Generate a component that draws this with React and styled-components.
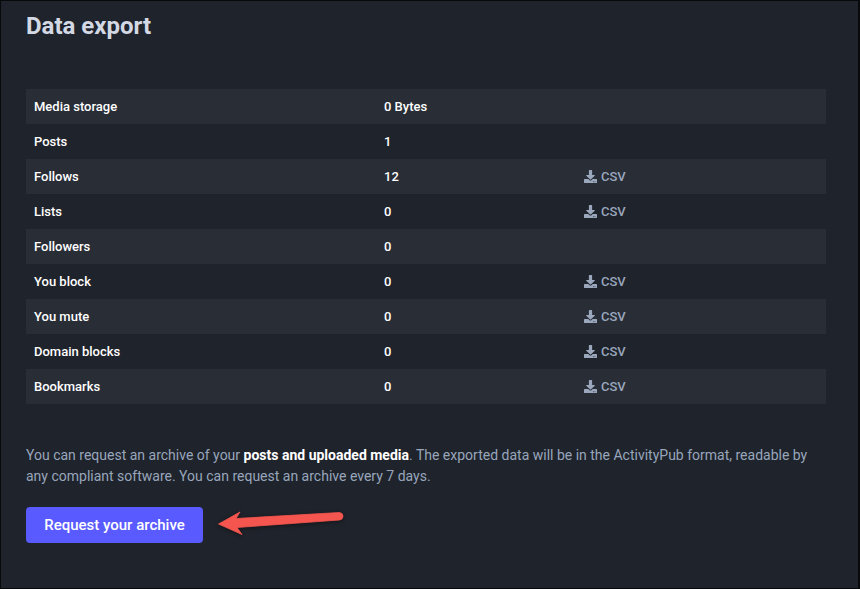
import React from 'react';
import styled, { createGlobalStyle } from 'styled-components';
import { FaDownload } from 'react-icons/fa';

const GlobalStyle = createGlobalStyle`
  html, body {
    margin: 0;
    padding: 0;
    background: #1f232b;
  }
  * {
    box-sizing: border-box;
  }
`;

const Page = styled.div`
  position: relative;
  width: 860px;
  height: 589px;
  padding: 11px 25px 0;
  background: #1f232b;
  border: 1px solid #08090b;
  border-right-width: 2px;
  font-family: Roboto, "Liberation Sans", sans-serif;
  overflow: hidden;
`;

const Title = styled.h1`
  margin: 0 0 49px;
  height: 28px;
  font-size: 24px;
  line-height: 28px;
  font-weight: 700;
  color: #d3d9e4;
`;

const Table = styled.div`
  width: 800px;
  margin-bottom: 41px;
`;

const Row = styled.div`
  display: grid;
  grid-template-columns: 350px 200px 250px;
  align-items: center;
  height: 35px;
  padding-bottom: 1px;
  background: ${({ $shaded }) => ($shaded ? '#282d36' : 'transparent')};
  font-size: 13px;
  font-weight: 500;
`;

const Label = styled.div`
  padding-left: 8px;
  color: #ffffff;
`;

const Value = styled.div`
  padding-left: 8px;
  color: #ffffff;
`;

const CsvLink = styled.a`
  display: flex;
  align-items: center;
  gap: 4px;
  padding-left: 8px;
  color: #9aa7bd;
  font-weight: 500;
  text-decoration: none;
`;

const Note = styled.p`
  width: 800px;
  margin: 0 0 20px;
  font-size: 14px;
  line-height: 21px;
  color: #98a6bc;

  strong {
    color: #ffffff;
    font-weight: 700;
  }
`;

const Button = styled.button`
  display: block;
  width: 177px;
  height: 36px;
  padding: 0;
  border: none;
  border-radius: 4px;
  background: #595aff;
  color: #ffffff;
  font-family: inherit;
  font-size: 15px;
  font-weight: 500;
`;

const Arrow = styled.svg`
  position: absolute;
  left: 209px;
  top: 499px;
  width: 145px;
  height: 45px;
  filter: drop-shadow(0 1px 2px rgba(0, 0, 0, 0.45));
`;

const rows = [
  { label: 'Media storage', value: '0 Bytes' },
  { label: 'Posts', value: '1' },
  { label: 'Follows', value: '12', csv: true },
  { label: 'Lists', value: '0', csv: true },
  { label: 'Followers', value: '0' },
  { label: 'You block', value: '0', csv: true },
  { label: 'You mute', value: '0', csv: true },
  { label: 'Domain blocks', value: '0', csv: true },
  { label: 'Bookmarks', value: '0', csv: true },
];

export default function App() {
  return (
    <Page>
      <GlobalStyle />
      <Title>Data export</Title>
      <Table>
        {rows.map((row, i) => (
          <Row key={row.label} $shaded={i % 2 === 0}>
            <Label>{row.label}</Label>
            <Value>{row.value}</Value>
            {row.csv ? (
              <CsvLink>
                <FaDownload size={13} />
                CSV
              </CsvLink>
            ) : (
              <span />
            )}
          </Row>
        ))}
      </Table>
      <Note>
        You can request an archive of your <strong>posts and uploaded media</strong>. The exported
        data will be in the ActivityPub format, readable by any compliant software. You can request
        an archive every 7 days.
      </Note>
      <Button>Request your archive</Button>
      <Arrow viewBox="0 0 145 45">
        <path d="M8.5 24 L30 12 L26 18.5 L129.5 12.5 Q133 13 133 16.2 Q133 19.5 129.5 20 L27 27.5 L32 34.5 Z" fill="#f4564f" stroke="#f4564f" strokeWidth="0.8" strokeLinejoin="round" />
      </Arrow>
    </Page>
  );
}
